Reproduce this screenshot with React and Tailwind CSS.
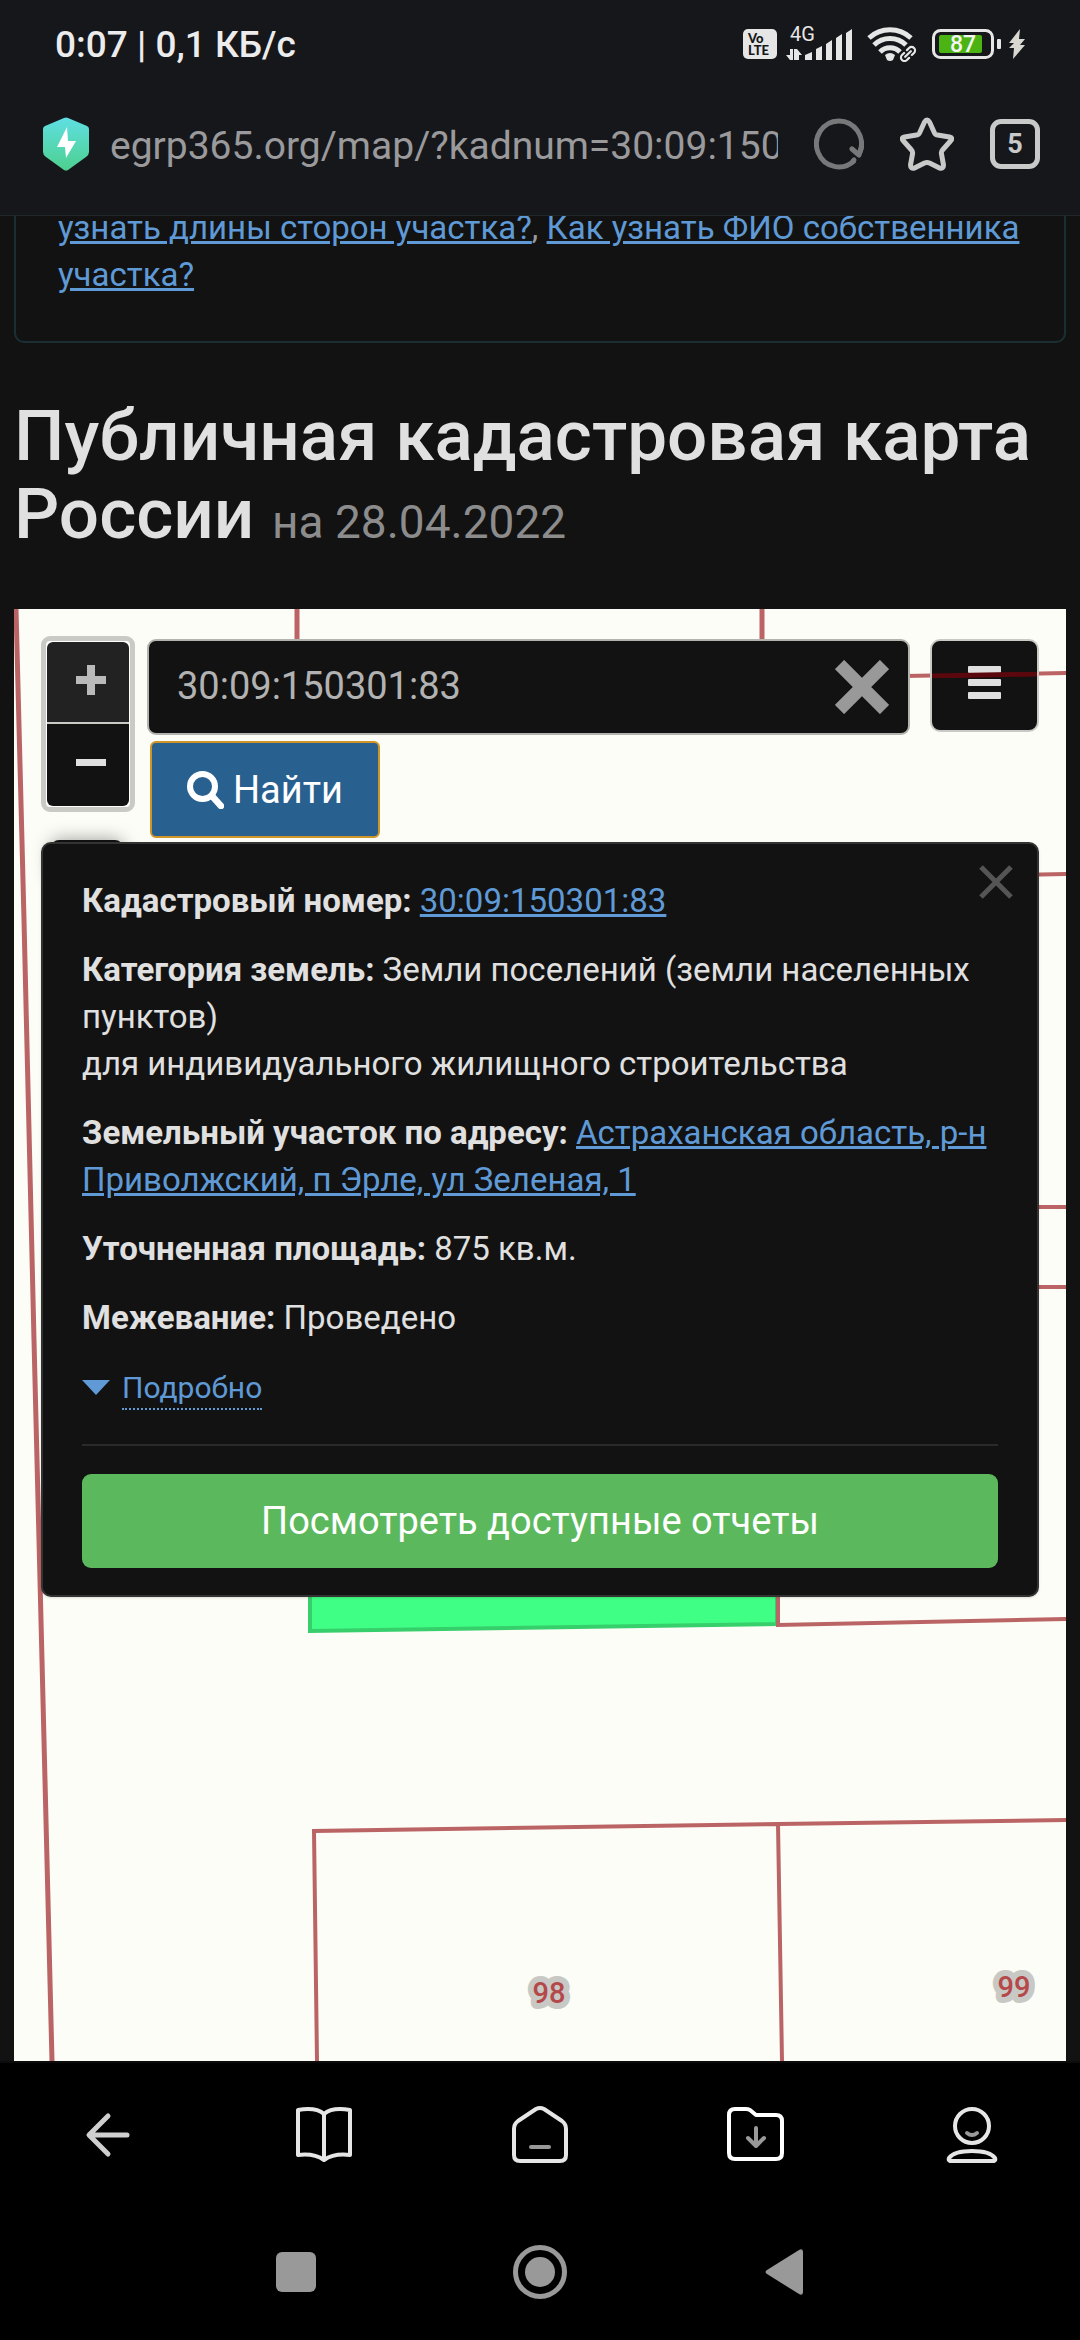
const plotStroke = "#bb6465"

export default function App() {
  return (
    <div className="flex min-h-screen flex-col overflow-hidden bg-[#121212] font-[Roboto,sans-serif] text-[#e0e0e0]">
      <header className="relative z-10 border-b border-[#22282a] bg-[#16171b] pb-[15px]">
        <StatusBar />
        <AddressBar />
      </header>

      <main className="flex flex-1 flex-col px-[14px]">
        {/* Tail of the help block, scrolled under the header */}
        <div className="-mt-3 rounded-b-[10px] border-2 border-t-0 border-[#1a2f33] px-[42px] pb-[43px] text-[33px] leading-[47px]">
          <TextLink>узнать длины сторон участка?</TextLink>
          <span className="text-[#999]">,</span> <TextLink>Как узнать ФИО собственника участка?</TextLink>
        </div>

        <h1 className="mt-[54px] mb-14 text-[71px] leading-[78px] font-medium">
          Публичная кадастровая карта России{" "}
          <small className="text-[46px] leading-none font-normal text-[#8c8c8c]">на 28.04.2022</small>
        </h1>

        <CadastralMap />
      </main>

      <BottomBar />
      <SystemNav />
    </div>
  )
}

function TextLink({ children }) {
  return (
    <a href="#" className="text-[#5f9ad6] underline">
      {children}
    </a>
  )
}

function StatusBar() {
  return (
    <div className="flex h-22 items-center justify-between pr-[54px] pl-[55px]">
      <div className="text-[37px] leading-none font-medium text-[#ececec]">0:07 | 0,1 КБ/с</div>
      <div className="flex items-center text-[#e6e6e6]">
        <div className="flex h-[30px] w-[34px] flex-col justify-center rounded-[5px] bg-[#e6e6e6] pl-[5px] font-[Lato,sans-serif] text-[13px] leading-[12px] font-black text-[#16171b]">
          <span>Vo</span>
          <span>LTE</span>
        </div>

        <svg viewBox="0 -4 68 44" className="ml-[9px] h-11 w-[68px]" fill="currentColor">
          <text x="4" y="15" fontSize="20">
            4G
          </text>
          <path d="M4 23h3v11H4L0 29h4zM10 34h-2V23h3l5 6h-3v5z" />
          <path d="M19 34v-5l7-3v8zM30 34V23l6-3v14zM40 34V18l6-4v20zM50 34V12l6-4v26zM60 34V7l6-4v31z" />
        </svg>

        <svg viewBox="0 0 50 36" className="ml-[13px] h-9 w-[50px]" fill="none" stroke="currentColor">
          <path d="M2 12a31 31 0 0 1 42 0" strokeWidth="5" />
          <path d="M7 19a23 23 0 0 1 32 0" strokeWidth="5" />
          <path d="M13 26a14 14 0 0 1 20 0" strokeWidth="5" />
          <path d="M18 29q5-4 10 0l-2 5q-3 2-6 0z" fill="currentColor" stroke="none" />
          <g strokeWidth="2.2" transform="rotate(-45 41 28)">
            <path d="M39 24.500h-3a3.500 3.500 0 0 0 0 7h3M43 24.500h3a3.500 3.500 0 0 1 0 7h-3M37 28h8" strokeLinecap="round" />
          </g>
        </svg>

        <svg viewBox="0 0 70 32" className="ml-[15px] h-8 w-[70px]" fill="none">
          <rect x="1.500" y="2.500" width="59" height="27" rx="7" stroke="#e6e6e6" strokeWidth="3" />
          <rect x="7" y="7" width="43" height="18" rx="2" fill="#4bb412" />
          <rect x="65" y="11" width="4" height="10" rx="1" fill="#e6e6e6" />
          <text x="31" y="24" textAnchor="middle" fontSize="23" fontWeight="500" fill="#f4f4f4">
            87
          </text>
        </svg>

        <svg viewBox="0 0 18 32" className="ml-[6px] h-8 w-[18px]" fill="#d8d8d0">
          <path d="M12 1L1 15h5L1 20h5L5 31l12-14h-5l5-6h-6z" />
        </svg>
      </div>
    </div>
  )
}

function AddressBar() {
  return (
    <div className="flex h-28 items-center pr-[40px] pl-[43px]">
      <svg viewBox="0 0 46 54" className="h-[54px] w-[46px] shrink-0">
        <defs>
          <linearGradient id="shield" x1="0" y1="0" x2="0" y2="1">
            <stop offset="0" stopColor="#5fdfe3" />
            <stop offset="1" stopColor="#4dd08e" />
          </linearGradient>
        </defs>
        <path
          d="M21 1q2-1 4 0l19 8q2 1 2 3v23q0 3-3 5L25 53q-2 1-4 0L3 40q-3-2-3-5V12q0-2 2-3z"
          fill="url(#shield)"
        />
        <path d="M24 10L14 30h8l1 11 10-17h-8z" fill="#fff" />
      </svg>

      <input
        type="text"
        aria-label="Адрес страницы"
        defaultValue="egrp365.org/map/?kadnum=30:09:150301:83"
        className="ml-[21px] h-14 min-w-0 flex-1 bg-transparent pt-[5px] text-[39px] text-[#9a9a9c] outline-none"
      />

      <button type="button" aria-label="Обновить" className="ml-9">
        <svg viewBox="0 0 50 52" className="h-[52px] w-[50px]" fill="none" stroke="#77787a" strokeWidth="5">
          <path d="M40.500 42.500A22.500 23 0 1 1 46 34" />
          <path d="M38 31l7 6 3-9" strokeLinecap="round" strokeLinejoin="round" />
          <path d="M39 43l1-1" strokeLinecap="round" />
        </svg>
      </button>
      <button type="button" aria-label="В закладки" className="ml-[36px]">
        <svg viewBox="0 0 54 54" className="h-[54px] w-[54px]" fill="none" stroke="#c9c9c9" strokeWidth="5">
          <path
            strokeLinejoin="round"
            d="M24.500 5q2.500-4 5 0l5 11q1 2 3 2l12 2q4 1 1 4l-8 9q-1.500 1.500-1 4l2 11q0 4-4 3l-10-5q-2.500-1-5 0l-10 5q-4 1-4-3l2-11q.5-2.500-1-4l-8-9q-3-3 1-4l12-2q2 0 3-2z"
          />
        </svg>
      </button>
      <button
        type="button"
        aria-label="Вкладки"
        className="ml-[36px] flex h-[50px] w-[50px] items-center justify-center rounded-[11px] border-[5px] border-[#c9c9c9] text-[27px] leading-none font-bold text-[#c9c9c9]"
      >
        5
      </button>
    </div>
  )
}

function CadastralMap() {
  return (
    <section className="relative min-h-[1200px] flex-1 overflow-hidden bg-[#fcfdf7] p-[27px]">
      <svg
        viewBox="0 0 1053 1452"
        preserveAspectRatio="xMinYMin slice"
        className="absolute inset-0 h-full w-full"
        fill="none"
        stroke={plotStroke}
        strokeWidth="4"
      >
        <path d="M2 0L10 311L20 731L28 1051L38 1452" strokeWidth="5" />
        <path d="M283 0V60M748 0V60" strokeWidth="5" />
        <path d="M890 67L1053 64M1000 266L1053 265M1000 598h53M1000 678h53" />
        <path d="M296 900H763V1015L296 1022z" fill="#40ff85" stroke="#37cf6b" />
        <path d="M764 900V1016L1053 1010" />
        <path d="M303 1452L300 1222L764 1215L1053 1211M764 1215L768 1452" />
        <g
          fill="#b4484b"
          stroke="#c8c9c4"
          strokeWidth="12"
          strokeLinejoin="round"
          fontSize="29"
          fontWeight="500"
          textAnchor="middle"
          style={{ paintOrder: "stroke" }}
        >
          <text x="535" y="1394">
            98
          </text>
          <text x="1000" y="1388">
            99
          </text>
        </g>
      </svg>

      {/* Locate button, mostly hidden by the popup */}
      <div className="absolute top-[231px] left-[37px] h-10 w-[72px] rounded-lg bg-[#121212] shadow-[0_0_18px_rgba(0,0,0,0.4)]" />

      <div className="relative flex items-start">
        <div className="w-[94px] rounded-[9px] border-[5px] border-[#c9cac5] bg-white p-px">
          <button
            type="button"
            aria-label="Приблизить"
            className="flex h-[80px] w-full items-center justify-center rounded-t-md bg-[#222] pb-1 pl-[5px]"
          >
            <svg viewBox="0 0 30 30" className="h-[30px] w-[30px]" fill="#bababa">
              <path d="M11 0h8v11h11v8H19v11h-8V19H0v-8h11z" />
            </svg>
          </button>
          <button
            type="button"
            aria-label="Отдалить"
            className="flex h-[84px] w-full items-center justify-center rounded-b-md border-t-2 border-[#c9cac5] bg-[#121212] pb-[5px] pl-[5px]"
          >
            <span className="h-[7px] w-[30px] bg-[#e0e0e0]" />
          </button>
        </div>

        <form className="ml-3 flex-1 pt-[3px]" onSubmit={(e) => e.preventDefault()}>
          <div className="flex h-24 items-center rounded-[9px] border-2 border-[#b3b3b0] bg-[#121212] pr-[19px] pl-7">
            <input
              type="text"
              aria-label="Кадастровый номер"
              defaultValue="30:09:150301:83"
              className="h-full min-w-0 flex-1 bg-transparent pb-[3px] text-[38px] text-[#b2b2b2] outline-none"
            />
            <button type="button" aria-label="Очистить">
              <svg viewBox="0 0 54 54" className="h-[54px] w-[54px]" stroke="#999" strokeWidth="13">
                <path d="M4.500 4.500l45 45M49.500 4.500l-45 45" />
              </svg>
            </button>
          </div>

          <button
            type="submit"
            className="mt-[6px] ml-[3px] flex h-[97px] items-center rounded-md border-2 border-[#cf9526] bg-[#286090] px-[35px] text-[38px] leading-none text-white"
          >
            <svg
              viewBox="0 0 37 38"
              className="mr-[9px] h-[38px] w-[37px]"
              fill="none"
              stroke="currentColor"
              strokeWidth="6"
            >
              <circle cx="15.500" cy="15.500" r="12.500" />
              <path d="M25 25l9 10" strokeLinecap="round" strokeWidth="6.500" />
            </svg>
            Найти
          </button>
        </form>

        <button
          type="button"
          aria-label="Меню"
          className="relative mt-[3px] ml-5 flex h-[93px] w-[109px] flex-col items-center justify-center gap-[6px] rounded-[10px] border-2 border-[#c9cac5] bg-[#121212] pb-[7px]"
        >
          <span className="h-[7px] w-[33px] rounded-[1px] bg-[#e0e0e0]" />
          <span className="h-[7px] w-[33px] rounded-[1px] bg-[#e0e0e0]" />
          <span className="h-[7px] w-[33px] rounded-[1px] bg-[#e0e0e0]" />
          {/* Plot border shows through the button */}
          <svg viewBox="0 0 109 6" className="absolute inset-x-0 top-[31px] h-[6px] w-full" preserveAspectRatio="none">
            <path d="M0 4L109 2" stroke="#5a080d" strokeWidth="5" />
          </svg>
        </button>
      </div>

      <PlotPopup />
    </section>
  )
}

function PlotPopup() {
  return (
    <article className="relative mt-1 rounded-[10px] border-2 border-[#333] bg-[#121212] px-[39px] pt-[33px] pb-[27px] text-[33px] leading-[47px] shadow-sm">
      <button type="button" aria-label="Закрыть" className="absolute top-[21px] right-[24px]">
        <svg viewBox="0 0 34 34" className="h-[34px] w-[34px]" stroke="#555" strokeWidth="5">
          <path d="M2 2l30 30M32 2L2 32" />
        </svg>
      </button>

      <div className="flex flex-col gap-[22px]">
        <p>
          <b>Кадастровый номер:</b> <TextLink>30:09:150301:83</TextLink>
        </p>
        <p>
          <b>Категория земель:</b> Земли поселений (земли населенных пунктов)
          <br />
          для индивидуального жилищного строительства
        </p>
        <p>
          <b>Земельный участок по адресу:</b>{" "}
          <TextLink>Астраханская область, р-н Приволжский, п Эрле, ул Зеленая, 1</TextLink>
        </p>
        <p>
          <b>Уточненная площадь:</b> 875 кв.м.
        </p>
        <p>
          <b>Межевание:</b> Проведено
        </p>
        <button type="button" className="flex h-12 items-center self-start text-[30px] leading-none text-[#5f9ad6]">
          <svg viewBox="0 0 28 15" className="mr-3 h-[15px] w-[28px]" fill="currentColor">
            <path d="M0 0h28L14 15z" />
          </svg>
          <span className="mt-[3px] border-b-2 border-dotted border-[#5f9ad6] pt-[6px] pb-[5px]">Подробно</span>
        </button>
      </div>

      <hr className="mt-[33px] mb-7 border-t-2 border-[#2a2a2a]" />

      <button type="button" className="h-[94px] w-full rounded-[9px] bg-[#5cb85c] text-[38px] leading-none text-white">
        Посмотреть доступные отчеты
      </button>
    </article>
  )
}

function BottomBar() {
  const icon = "h-[60px] w-[60px]"
  return (
    <nav className="grid h-37 grid-cols-5 place-items-center border-t-2 border-[#0c0c0c] bg-black pb-[2px]">
      <button type="button" aria-label="Назад">
        <svg viewBox="0 0 60 60" className={icon} fill="none" stroke="#cfcfcf" strokeWidth="5" strokeLinecap="round" strokeLinejoin="round">
          <path d="M49 30H12M30 11L11 30l19 19" />
        </svg>
      </button>
      <button type="button" aria-label="Журнал">
        <svg viewBox="0 0 60 60" className={icon} fill="none" stroke="#e6e6e6" strokeWidth="4" strokeLinejoin="round">
          <path d="M4 5q18-3 26 4 8-7 26-4v45q-16-2-26 5-10-7-26-5zM30 9v46" />
        </svg>
      </button>
      <button type="button" aria-label="Домой">
        <svg viewBox="0 0 60 60" className={icon} fill="none" stroke="#e6e6e6" strokeWidth="4" strokeLinejoin="round">
          <path d="M26 4q4-2 8 0l18 12q4 3 4 8v26q0 6-6 6H10q-6 0-6-6V24q0-5 4-8z" />
          <path d="M21 42h18" stroke="#999" strokeLinecap="round" />
        </svg>
      </button>
      <button type="button" aria-label="Загрузки">
        <svg viewBox="0 0 60 60" className={icon} fill="none" stroke="#fff" strokeWidth="4" strokeLinejoin="round">
          <path d="M9 4h11q2 0 4 1l6 5h20q6 0 6 6v32q0 6-6 6H9q-6 0-6-6V10q0-6 6-6z" />
          <path d="M30 23v18M22 33l8 8 8-8" stroke="#999" strokeLinecap="round" />
        </svg>
      </button>
      <button type="button" aria-label="Профиль">
        <svg viewBox="0 0 60 60" className={icon} fill="none" stroke="#e6e6e6" strokeWidth="4" strokeLinejoin="round">
          <ellipse cx="30" cy="21" rx="17" ry="17" />
          <path d="M8 56q-2-1-1-3 5-7 23-7t23 7q1 2-1 3z" />
          <path d="M25 28q5 4 10 0" stroke="#999" strokeLinecap="round" />
        </svg>
      </button>
    </nav>
  )
}

function SystemNav() {
  return (
    <nav className="flex h-[131px] items-center justify-center bg-black pb-[6px]">
      <button type="button" aria-label="Недавние" className="flex w-61 justify-center">
        <span className="h-10 w-10 rounded-md bg-[#999]" />
      </button>
      <button type="button" aria-label="Главный экран" className="flex w-61 justify-center">
        <svg viewBox="0 0 54 54" className="h-[54px] w-[54px]">
          <circle cx="27" cy="27" r="24.500" fill="none" stroke="#999" strokeWidth="5" />
          <circle cx="27" cy="27" r="15" fill="#999" />
        </svg>
      </button>
      <button type="button" aria-label="Назад" className="flex w-61 justify-center">
        <svg viewBox="0 0 38 46" className="h-[46px] w-[38px]">
          <path d="M2 21L34 1q4-2 4 2v40q0 4-4 2L2 25q-3-2 0-4z" fill="#999" />
        </svg>
      </button>
    </nav>
  )
}
